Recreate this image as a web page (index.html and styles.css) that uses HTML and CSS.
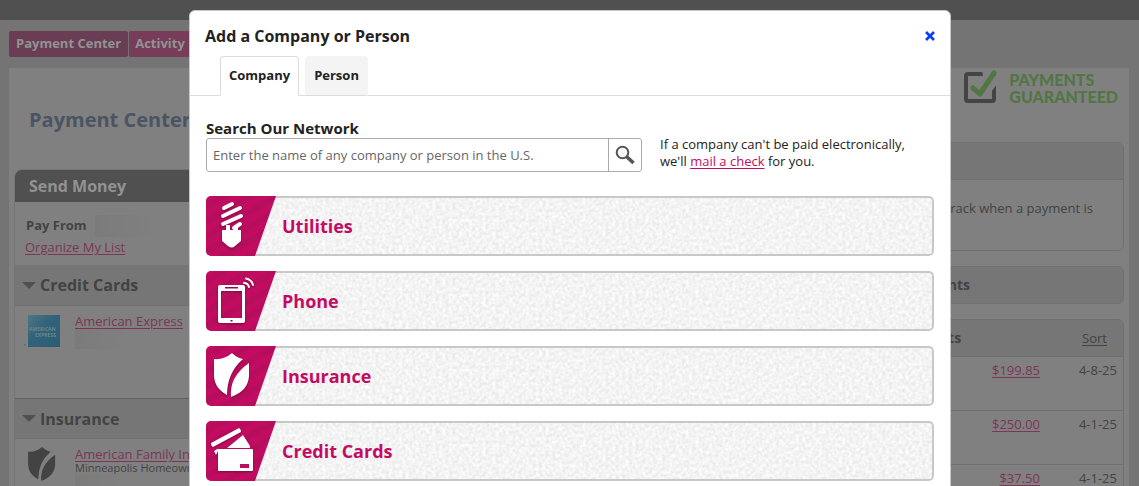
FILE: index.html
```
<!DOCTYPE html>
<html lang="en">
<head>
<meta charset="utf-8">
<title>Payment Center</title>
<link rel="stylesheet" href="styles.css">
</head>
<body>
<svg class="defs" aria-hidden="true">
  <filter id="grain" x="0" y="0" width="100%" height="100%" color-interpolation-filters="sRGB">
    <feTurbulence type="fractalNoise" baseFrequency="0.3" numOctaves="2" seed="4"/>
    <feColorMatrix values="0.14 0 0 0 0.885  0.14 0 0 0 0.885  0.14 0 0 0 0.885  0 0 0 0 1"/>
  </filter>
  <symbol id="shield" viewBox="0 0 36 44">
    <path d="M0 6Q10 7 18 0Q23 5 29 6Q13 20 13 42Q0 35 0 22Z"/>
    <path d="M35 10V23Q34 38 17 44Q15 24 35 10Z"/>
  </symbol>
</svg>

<div class="page">
  <div class="topbar"></div>
  <nav class="nav">
    <a class="nav-link nav-current" href="#">Payment Center</a>
    <a class="nav-link" href="#">Activity</a>
  </nav>
  <main class="content">
    <section class="left">
      <h1 class="page-title">Payment Center</h1>
      <div class="send">
        <h2 class="send-title">Send Money</h2>
        <div class="pay-from">
          <div class="pay-line"><b>Pay From</b><span class="redacted"></span></div>
          <a class="link" href="#">Organize My List</a>
        </div>
        <h3 class="group"><span class="caret"></span>Credit Cards</h3>
        <div class="payee">
          <svg class="payee-logo" viewBox="0 0 36 34">
            <defs><linearGradient id="blue" x1="0" y1="0" x2="1" y2="1"><stop offset="0" stop-color="#527685"/><stop offset=".4" stop-color="#31647a"/><stop offset="1" stop-color="#2b5c75"/></linearGradient></defs>
            <path fill="url(#blue)" d="M4 1H36V33H4Z"/>
            <text class="amex" x="5" y="17">AMERICAN</text>
            <text class="amex" x="11" y="23">EXPRESS</text>
            <circle cx="1" cy="31" r="1" fill="#55707a"/>
          </svg>
          <div class="payee-text"><a class="link" href="#">American Express</a><span class="redacted small"></span></div>
        </div>
        <h3 class="group second"><span class="caret"></span>Insurance</h3>
        <div class="payee">
          <svg class="payee-logo payee-shield" viewBox="0 0 36 44"><use href="#shield"/></svg>
          <div class="payee-text"><a class="link" href="#">American Family Insurance</a><span class="note">Minneapolis Homeowners</span><span class="redacted small"></span></div>
        </div>
      </div>
    </section>
    <aside class="right">
      <div class="guarantee">
        <svg class="guarantee-icon" viewBox="0 0 34 34">
          <path d="M4 4H28Q30 4 30 6V29Q30 31 28 31H4Q2 31 2 29V6Q2 4 4 4Z" fill="none" stroke="#444" stroke-width="4"/>
          <path d="M18 1H26L34 8V13L27 22L16 27L20 10Z" fill="#808080"/>
          <path d="M9 18L16 24L30 3" fill="none" stroke="#517644" stroke-width="5" stroke-linecap="round" stroke-linejoin="round"/>
        </svg>
        <span>PAYMENTS<br>GUARANTEED</span>
      </div>
      <div class="card">
        <div class="card-head"></div>
        <p class="card-text">track when a payment is</p>
      </div>
      <div class="card"><h3 class="card-head pending">Payments</h3></div>
      <div class="card">
        <div class="card-head recent"><h3 class="recent-title">Payments</h3><a class="sort" href="#">Sort</a></div>
        <table class="payments">
          <tr><td><a class="link" href="#">$199.85</a></td><td>4-8-25</td></tr>
          <tr><td><a class="link" href="#">$250.00</a></td><td>4-1-25</td></tr>
          <tr><td><a class="link" href="#">$37.50</a></td><td>4-1-25</td></tr>
        </table>
      </div>
    </aside>
  </main>
</div>

<div class="overlay">
  <div class="dialog" role="dialog" aria-labelledby="dialog-title">
    <header class="dialog-head">
      <h2 class="dialog-title" id="dialog-title">Add a Company or Person</h2>
      <button class="close" type="button" aria-label="Close">
        <svg viewBox="0 0 10 10" width="10" height="10"><path d="M1 1L9 9M9 1L1 9" stroke="#0a3cff" stroke-width="2.600"/></svg>
      </button>
    </header>
    <div class="tabs" role="tablist">
      <button class="tab tab-active" type="button" role="tab" aria-selected="true">Company</button>
      <button class="tab" type="button" role="tab">Person</button>
    </div>
    <div class="dialog-body">
      <div class="search-row">
        <form class="search">
          <label class="search-label" for="q">Search Our Network</label>
          <div class="search-box">
            <input class="search-input" id="q" type="text" placeholder="Enter the name of any company or person in the U.S.">
            <button class="search-button" type="button" aria-label="Search">
              <svg viewBox="0 0 20 20" width="20" height="20"><path d="M11.500 11.500L18.500 18" stroke="#555" stroke-width="3.600"/><circle cx="7.500" cy="7.500" r="5.800" fill="#f7f8f9" stroke="#555" stroke-width="2"/></svg>
            </button>
          </div>
        </form>
        <p class="hint">If a company can't be paid electronically, we'll <a class="hint-link" href="#">mail a check</a> for you.</p>
      </div>
      <div class="categories">
        <button class="category" type="button">
          <span class="badge"><svg class="badge-icon" viewBox="0 0 50 60">
            <g fill="none" stroke="#fff" stroke-width="4" stroke-linecap="round"><path d="M18 12L26 8M17 20L34 12M17 28L35 20M28 32L34 28"/><path d="M22 29V36M30 31V36" stroke-width="4" stroke-linecap="butt"/></g>
            <path fill="#fff" d="M16 34H35V45L29 50Q26 53 22 50L16 45Z"/>
          </svg></span>
          <span class="category-name">Utilities</span>
        </button>
        <button class="category" type="button">
          <span class="badge"><svg class="badge-icon" viewBox="0 0 50 60">
            <path fill="#fff" fill-rule="evenodd" d="M14 14H37Q39 14 39 16V50Q39 52 37 52H14Q12 52 12 50V16Q12 14 14 14ZM15 20V47H36V20ZM19 16V17.500H32V16ZM24.500 49V50.500H26.500V49Z"/>
            <path d="M38 12Q42 12 43 16M40 7.500Q46 9 47 14" fill="none" stroke="#fff" stroke-width="2" stroke-linecap="round"/>
          </svg></span>
          <span class="category-name">Phone</span>
        </button>
        <button class="category" type="button">
          <span class="badge"><svg class="badge-icon" viewBox="0 0 50 60"><use href="#shield" x="8" y="7" width="36" height="44" fill="#fff"/></svg></span>
          <span class="category-name">Insurance</span>
        </button>
        <button class="category" type="button">
          <span class="badge"><svg class="badge-icon" viewBox="0 0 50 60">
            <g fill="#fff"><path d="M5 22L33 7Q35 8 35 11L7 26Q5 25 5 22Z"/><path d="M8 30L13 27H21L37 14L44 25V28H13L10 34Z"/><rect x="12" y="28" width="35" height="22" rx="1"/></g>
            <path d="M12 27.500H45" stroke="#b80e5e" stroke-width="1"/>
            <rect x="34" y="43" width="9" height="4" fill="#b80e5e"/>
          </svg></span>
          <span class="category-name">Credit Cards</span>
        </button>
      </div>
    </div>
  </div>
</div>
</body>
</html>
```
FILE: styles.css
```
* { box-sizing: border-box; }
body { margin: 0; height: 100vh; overflow: hidden; background: #747474; color: #434343; font: 13px/18px "Open Sans", "Noto Sans", sans-serif; }
h1, h2, h3, p { margin: 0; }
button, input { font: inherit; }
.defs { position: absolute; width: 0; height: 0; }

.page { height: 100vh; overflow: hidden; }
.topbar { height: 20px; background: #505050; }
.nav { display: flex; gap: 1px; padding: 11px 9px; }
.nav-link { padding: 3px 7px; height: 26px; background: #783c5b; color: #929292; font-weight: 700; text-decoration: none; border-radius: 2px; }
.nav-current { background: #6b3d55; }
.nav-link + .nav-link { padding-left: 6px; }
.content { display: grid; grid-template-columns: 3fr 1fr; gap: 20px; margin: 0 10px 0 9px; padding: 0 5px; background: #808080; }
.link { color: #7d3557; text-decoration: underline; text-underline-offset: 2px; }
.page-title { padding: 37px 15px 34px; font-size: 20px; line-height: 30px; color: #4b5462; }
.send { border: 1px solid #747474; border-radius: 8px 8px 0 0; overflow: hidden; }
.send-title { padding: 5px 14px; background: #505050; color: #929292; font-size: 16px; line-height: 22px; }
.pay-from { padding: 13px 10px 8px; height: 63px; line-height: 21px; }
.pay-line { display: flex; gap: 8px; padding-left: 1px; }
.redacted { display: block; width: 60px; height: 22px; background: linear-gradient(90deg, #7b7b7b, #808080); }
.small { width: 52px; height: 20px; }
.group { display: flex; align-items: center; gap: 4px; height: 41px; padding-left: 7px; background: #767676; border-bottom: 1px solid #6f6f6f; font-size: 16px; line-height: 24px; }
.second { border-top: 1px solid #606060; }
.caret { border: 7px solid transparent; border-top-color: #505050; border-bottom: 0; }
.payee { display: flex; gap: 15px; height: 92px; padding: 7px 9px; }
.payee-logo { width: 36px; height: 34px; margin-top: 1px; }
.payee-shield { fill: #434343; }
.payee-text { display: flex; flex-direction: column; line-height: 16px; }
.amex { font-size: 5px; font-weight: 700; fill: #6c858d; }
.note { font-size: 11px; line-height: 12px; }

.right { display: flex; flex-direction: column; gap: 15px; }
.guarantee { display: flex; justify-content: flex-end; gap: 11px; height: 59px; padding: 2px 6px 0 0; color: #517644; font: 900 16px/17px Lato, sans-serif; }
.guarantee span { padding-top: 1px; }
.guarantee-icon { width: 34px; height: 34px; }
.card { border: 1px solid #707070; border-radius: 6px; overflow: hidden; }
.card-head { height: 36px; background: #767676; }
.card-text { height: 71px; padding: 19px 30px; border-top: 1px solid #707070; text-align: right; white-space: nowrap; }
.pending, .recent-title { font-size: 14px; line-height: 36px; }
.pending { text-align: right; padding-right: 153px; }
.recent { display: flex; justify-content: flex-end; gap: 121px; padding-right: 16px; line-height: 36px; }
.sort { color: #434343; text-underline-offset: 2px; }
.payments { width: 100%; border-collapse: collapse; text-align: right; }
.payments td { height: 54px; padding: 4px 6px; border-top: 1px solid #707070; vertical-align: top; }
.payments td:last-child { width: 77px; }

.overlay { position: fixed; inset: 0; display: flex; justify-content: center; align-items: flex-start; padding: 10px 0 0 1px; overflow: hidden; }
.dialog { width: 762px; max-width: 100%; background: #fff; border: 1px solid #c8c8c8; border-radius: 6px; color: #222; }
.dialog-head { display: flex; justify-content: space-between; align-items: center; height: 45px; padding: 5px 15px 0; }
.dialog-title { font-size: 16px; line-height: 24px; }
.close { display: flex; padding: 0; border: 0; background: none; }
.tabs { display: flex; gap: 6px; padding-left: 30px; border-bottom: 1px solid #ddd; }
.tab { height: 40px; margin-bottom: -1px; padding: 0 8px 2px; border: 1px solid #f4f4f4; border-bottom-color: #ddd; border-radius: 4px 4px 0 0; background: #f4f4f4; color: #222; font-weight: 700; }
.tab-active { background: #fff; border-color: #ddd; border-bottom-color: #fff; }
.dialog-body { padding: 22px 16px; }
.search-row { display: flex; gap: 18px; align-items: flex-end; }
.search { flex: 0 1 436px; }
.search-label { display: block; font-size: 15px; line-height: 20px; font-weight: 700; }
.search-box { display: flex; height: 34px; border: 1px solid #aaa; border-radius: 3px; }
.search-input { flex: 1; min-width: 0; padding: 0 6px; border: 0; background: none; color: #222; }
.search-input::placeholder { color: #666; }
.search-button { display: grid; place-items: center; width: 33px; padding: 0; border: 0; border-left: 1px solid #aaa; background: none; }
.hint { flex: 1; padding-bottom: 2px; line-height: 17px; }
.hint-link { color: #c20c62; text-underline-offset: 2px; }
.categories { display: grid; gap: 15px; padding-top: 24px; }
.category { display: flex; align-items: center; gap: 6px; height: 60px; padding: 0; border: 0; border-radius: 5px; overflow: hidden; background: #f4f4f4; color: #c20c62; position: relative; text-align: left; }
.category::before { content: ""; position: absolute; inset: 0; background: #f4f4f4; filter: url(#grain); }
.category::after { content: ""; position: absolute; inset: 0; border: 2px solid #c8c8c8; border-radius: 5px; }
.badge { position: relative; z-index: 1; width: 70px; height: 60px; clip-path: polygon(0 0, 100% 0, 70% 100%, 0 100%); background: repeating-linear-gradient(150deg, #c20c62 0 5px, #b60d5c 7px 11px, #c20c62 13px); }
.badge-icon { width: 50px; height: 60px; filter: drop-shadow(0 1px 1px #7a083d); }
.category-name { position: relative; font-size: 18px; line-height: 24px; font-weight: 700; }
```
